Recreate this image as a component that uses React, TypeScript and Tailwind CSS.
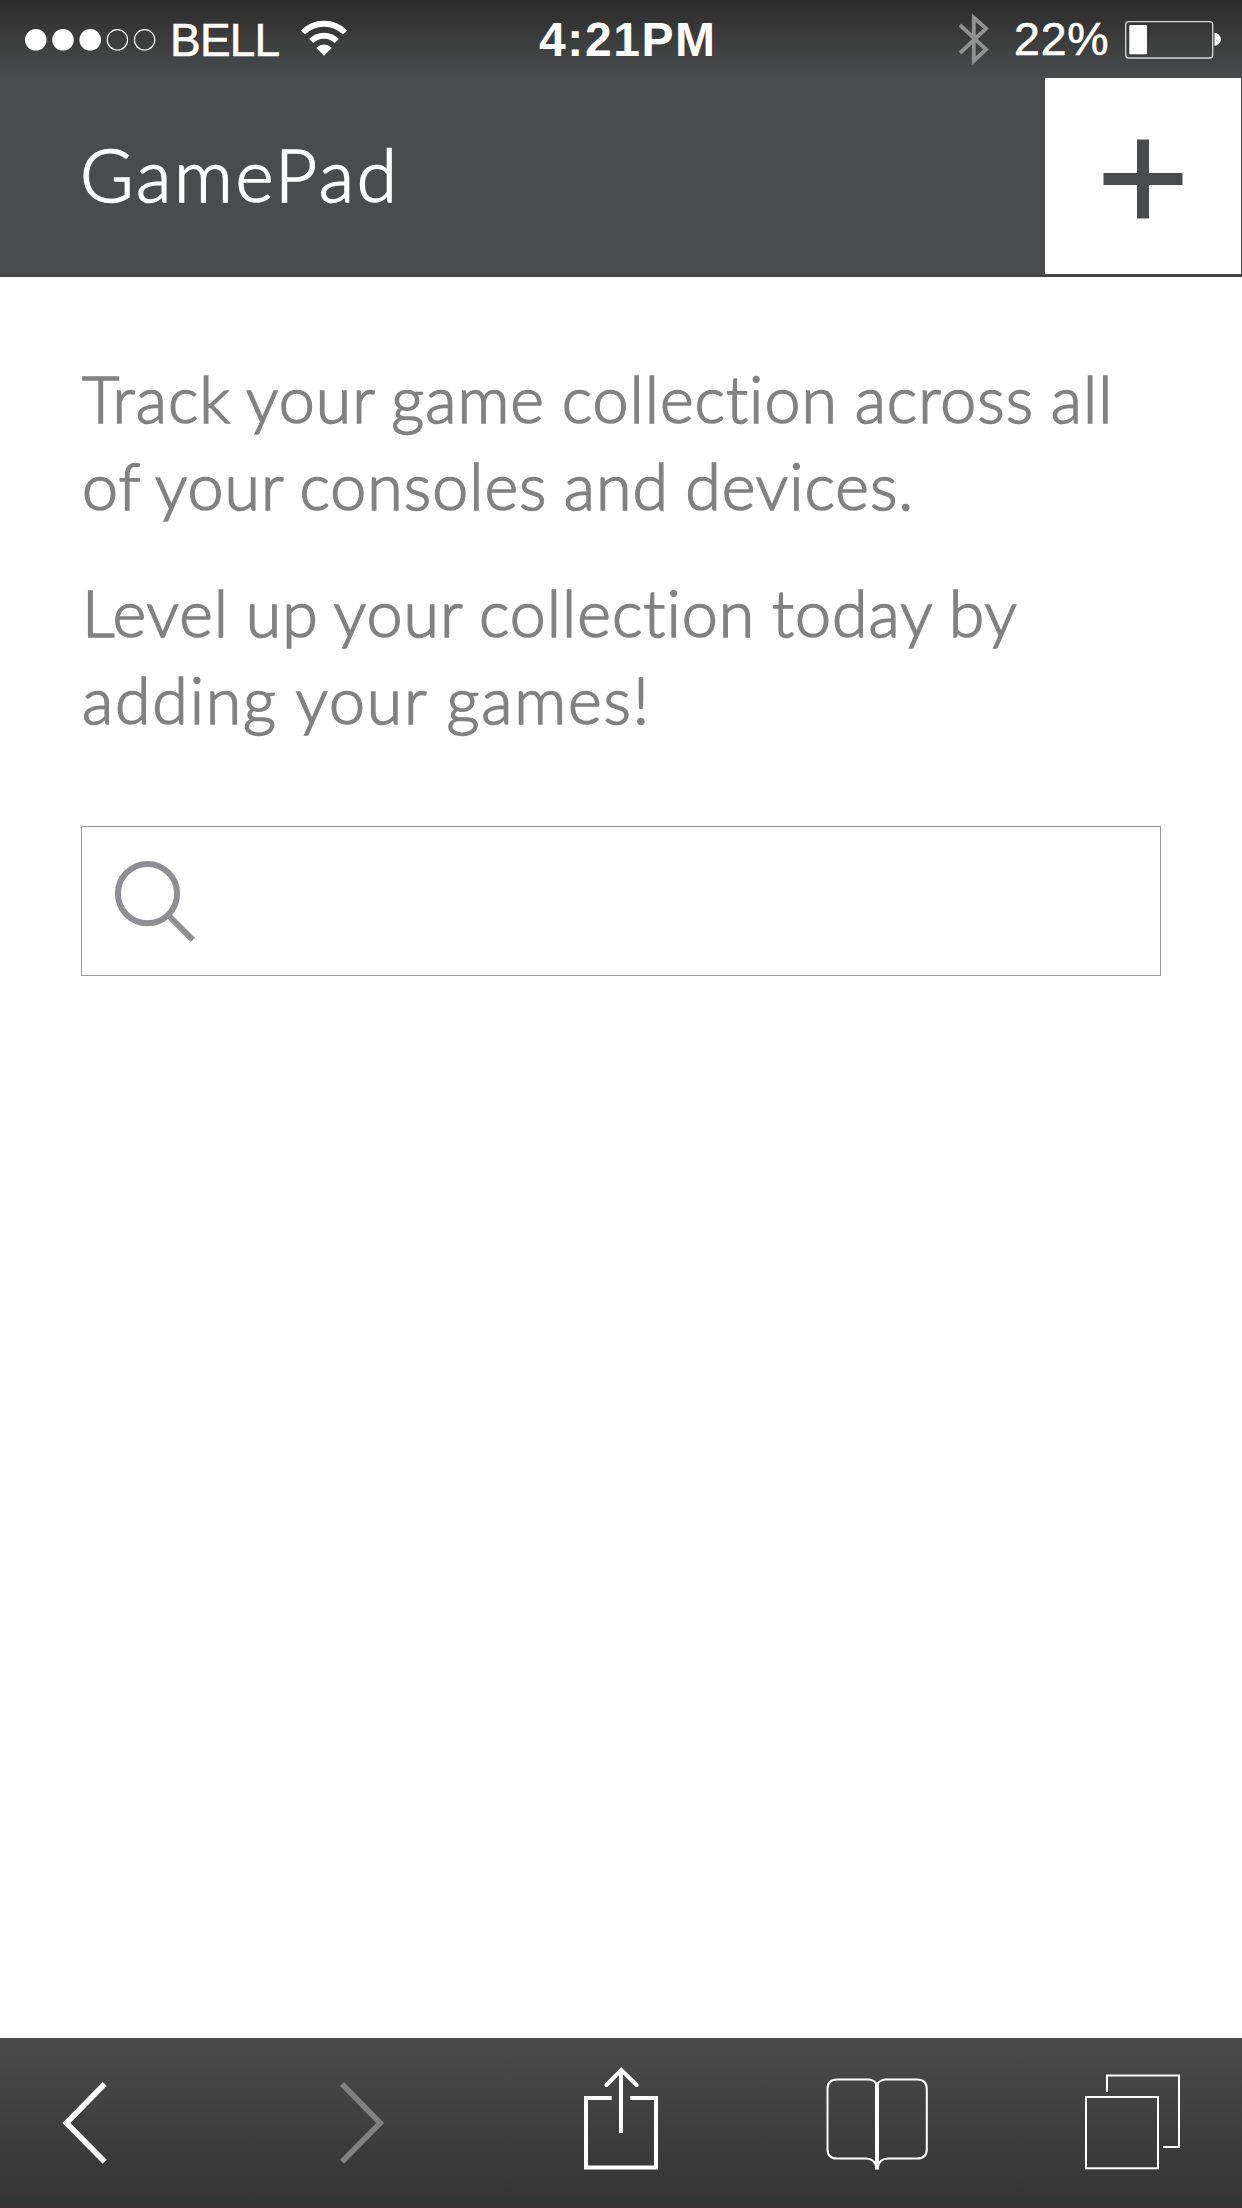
import React from "react";

function StatusBar() {
  return (
    <div className="flex h-[78px] shrink-0 items-start bg-linear-to-b from-[#2a2a2a] via-[#383938] via-40% to-[#4a4b4d] font-['Liberation_Sans',sans-serif] text-white">
      <div className="flex h-[78px] w-[540px] items-start">
        <svg className="ml-6 mt-7 shrink-0" width="134" height="24" viewBox="24 28 134 24">
          <g fill="#fff">
            <circle cx="35.8" cy="39.8" r="10.8" />
            <circle cx="63" cy="39.8" r="10.8" />
            <circle cx="90.2" cy="39.8" r="10.8" />
          </g>
          <g fill="none" stroke="#fff" strokeWidth="1.1">
            <circle cx="117.4" cy="39.8" r="10.2" />
            <circle cx="144.6" cy="39.8" r="10.2" />
          </g>
        </svg>
        <span className="ml-[12px] mt-[12px] w-[110px] text-[46px] leading-[56px] tracking-[-0.8px] [-webkit-text-stroke:0.6px_white]">BELL</span>
        <svg className="ml-[19px] mt-5 shrink-0" width="50" height="38" viewBox="299 20 50 38">
          <g fill="none" stroke="#fff" strokeWidth="6">
            <path d="M302.9 32.5a29.8 29.8 0 0 1 42.2 0" />
            <path d="M311.3 41a17.9 17.9 0 0 1 25.4 0" />
          </g>
          <path d="M324 55.8 316.3 47.8Q324 41.2 331.7 47.8Z" fill="#fff" />
        </svg>
      </div>
      <span className="-ml-px mt-[12px] w-[421px] text-[48px] font-bold leading-[56px] tracking-[1.6px]">4:21PM</span>
      <svg className="mt-3 -ml-[1px] shrink-0" width="30" height="54" viewBox="959 12 30 54">
        <path d="M960 25 986 49.4 973.8 60.8V17.6L986 28.6 960 53" fill="none" stroke="#929292" strokeWidth="3.8" />
      </svg>
      <span className="ml-[25px] mt-[11px] w-[110px] text-[46.5px] leading-[56px] tracking-[0.8px] [-webkit-text-stroke:0.6px_white]">22%</span>
      <svg className="mt-5 shrink-0" width="98" height="40" viewBox="1124 20 98 40">
        <rect x="1125.7" y="21.7" width="87" height="36.3" rx="3" fill="none" stroke="#d8d8d8" strokeWidth="1.3" />
        <rect x="1129.3" y="25" width="17.7" height="29.3" rx="1" fill="#fff" />
        <path d="M1214.5 32.7C1223 34 1223 44.7 1214.5 46Z" fill="#fff" />
      </svg>
    </div>
  );
}

function Header() {
  return (
    <header className="flex h-[199px] shrink-0 justify-between border-b-2 border-[#434345] bg-[#4a4b4d] pr-px">
      <h1 className="ml-[80px] mt-[48px] font-['Lato',sans-serif] text-[73px] font-light leading-[96px] tracking-[2.7px] text-white [-webkit-text-stroke:1.6px_white]">GamePad</h1>
      <button className="flex h-[196px] w-[196px] items-start bg-white" aria-label="Add game">
        <svg className="ml-[58px] mt-[61px]" width="80" height="80" viewBox="0 0 80 80">
          <path d="M.5 40H79.5M40 .5V79.5" stroke="#4a4b4d" strokeWidth="12" />
        </svg>
      </button>
    </header>
  );
}

function Intro() {
  return (
    <div className="flex flex-col gap-10 whitespace-nowrap pl-[82px] pt-[78px] font-['Lato',sans-serif] text-[64.5px] font-light leading-[87px] text-[#828282] [-webkit-text-stroke:1.6px_#828282]">
      <p>
        <span className="block tracking-[1px] [word-spacing:-1.8px]">Track your game collection across all</span>
        <span className="block tracking-[1px] [word-spacing:-2.3px]">of your consoles and devices.</span>
      </p>
      <p>
        <span className="block tracking-[1px] [word-spacing:-1.8px]">Level up your collection today by</span>
        <span className="block tracking-[1.8px]">adding your games!</span>
      </p>
    </div>
  );
}

function SearchBox() {
  return (
    <div className="mx-[81px] mt-[83px] flex h-[150px] items-start border border-[#999]">
      <svg className="ml-[32px] mt-[33px]" width="82" height="82" viewBox="114 860 82 82" fill="none" stroke="#8e8e93" strokeWidth="6">
        <circle cx="147.5" cy="893.6" r="29.6" />
        <path d="M168.5 915.5 192.8 939.8" />
      </svg>
    </div>
  );
}

function Toolbar() {
  return (
    <nav className="flex h-[170px] shrink-0 items-start border-b border-[#3a3335] bg-linear-to-b from-[#4a4a4a] to-[#343434]">
      <svg className="ml-[60px] mt-[42px] shrink-0" width="50" height="86" viewBox="60 2080 50 86">
        <path d="M104.7 2084 66.4 2123 104.7 2161.8" fill="none" stroke="#fff" strokeWidth="5.6" />
      </svg>
      <svg className="ml-[226px] mt-[42px] shrink-0" width="50" height="86" viewBox="336 2080 50 86">
        <path d="M342 2084 380.2 2123 342 2161.8" fill="none" stroke="#808080" strokeWidth="5.6" />
      </svg>
      <svg className="ml-[194px] mt-[26px] shrink-0" width="80" height="108" viewBox="580 2064 80 108" fill="none" stroke="#fff" strokeWidth="4">
        <path d="M611.7 2098H586V2167.6H656V2098H630.3M621 2070V2133" />
        <path d="M606.4 2085 621.3 2070 636.7 2085" strokeLinecap="round" />
      </svg>
      <svg className="ml-[162px] mt-[34px] shrink-0" width="110" height="100" viewBox="822 2072 110 100" fill="none" stroke="#fff" strokeWidth="2">
        <path d="M877 2084Q873 2079.5 868 2079.5H837Q827.5 2079.5 827.5 2089V2149Q827.5 2158.6 837 2158.6H866Q875 2158.6 876.5 2168" />
        <path d="M877 2084Q881 2079.5 886 2079.5H917Q926.8 2079.5 926.8 2089V2149Q926.8 2158.6 917 2158.6H888Q879 2158.6 877.5 2168" />
        <path d="M877 2083V2169.6" strokeWidth="4" />
      </svg>
      <svg className="ml-[148px] mt-[32px] shrink-0" width="104" height="102" viewBox="1080 2070 104 102" fill="none" stroke="#fff" strokeWidth="2">
        <rect x="1086" y="2097" width="72" height="71.3" />
        <path d="M1107 2092V2075.5H1179V2147H1163" />
      </svg>
    </nav>
  );
}

export default function App() {
  return (
    <div className="flex h-[2208px] w-[1242px] flex-col overflow-hidden bg-white">
      <StatusBar />
      <Header />
      <main className="flex-1">
        <Intro />
        <SearchBox />
      </main>
      <Toolbar />
    </div>
  );
}
